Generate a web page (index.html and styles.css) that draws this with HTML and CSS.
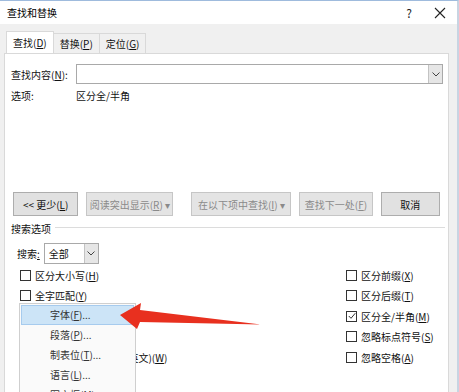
FILE: index.html
```html
<!DOCTYPE html>
<html lang="zh-CN">
<head>
  <meta charset="UTF-8">
  <title>查找和替换</title>
  <link rel="stylesheet" href="styles.css">
</head>
<body>
  <div class="window">
    <!-- 标题栏 -->
    <div class="titlebar">
      <span class="title">查找和替换</span>
      <span class="help">?</span>
      <svg class="close" width="12" height="12" viewBox="0 0 12 12"><path d="M1 1L11 11M11 1L1 11" stroke="#222" stroke-width="1.1" fill="none"/></svg>
    </div>
    <!-- 标签页 -->
    <div class="tabs">
      <div class="tab active">查找(<u>D</u>)</div>
      <div class="tab">替换(<u>P</u>)</div>
      <div class="tab">定位(<u>G</u>)</div>
    </div>
    <div class="panel">
      <div class="find-row">
        <span class="label">查找内容(<u>N</u>):</span>
        <div class="combo">
          <span class="combo-btn"><svg width="8" height="5" viewBox="0 0 8 5"><path d="M0.5 0.5L4 4L7.5 0.5" stroke="#444" fill="none"/></svg></span>
        </div>
      </div>
      <div class="opt-row">
        <span class="label">选项:</span>
        <span>区分全/半角</span>
      </div>
      <div class="btn-row">
        <button class="btn btn-less">&lt;&lt; 更少(<u>L</u>)</button>
        <button class="btn btn-read" disabled>阅读突出显示(<u>R</u>) ▾</button>
        <button class="btn btn-in" disabled>在以下项中查找(<u>I</u>) ▾</button>
        <button class="btn btn-next" disabled>查找下一处(<u>F</u>)</button>
        <button class="btn btn-cancel">取消</button>
      </div>
      <div class="section-title"><span>搜索选项</span></div>
      <div class="search-row">
        <span>搜索<u>:</u></span>
        <div class="select">
          <span class="select-val">全部</span>
          <span class="select-btn"><svg width="8" height="5" viewBox="0 0 8 5"><path d="M0.5 0.5L4 4L7.5 0.5" stroke="#444" fill="none"/></svg></span>
        </div>
      </div>
      <div class="checks">
        <div class="col">
          <div class="check"><span class="box"></span>区分大小写(<u>H</u>)</div>
          <div class="check"><span class="box"></span>全字匹配(<u>Y</u>)</div>
          <div class="check"><span class="box"></span>使用通配符(<u>U</u>)</div>
          <div class="check"><span class="box"></span>同音(英文)(<u>K</u>)</div>
          <div class="check"><span class="box"></span>查找单词的所有形式(英文)(<u>W</u>)</div>
        </div>
        <div class="col col-right">
          <div class="check"><span class="box"></span>区分前缀(<u>X</u>)</div>
          <div class="check"><span class="box"></span>区分后缀(<u>T</u>)</div>
          <div class="check"><span class="box checked"><svg width="8" height="8" viewBox="0 0 8 8"><path d="M0.8 4L3 6.3L7.3 1.2" stroke="#333" stroke-width="1" fill="none"/></svg></span>区分全/半角(<u>M</u>)</div>
          <div class="check"><span class="box"></span>忽略标点符号(<u>S</u>)</div>
          <div class="check"><span class="box"></span>忽略空格(<u>A</u>)</div>
        </div>
      </div>
    </div>
  </div>

  <!-- 格式 弹出菜单 -->
  <div class="menu">
    <div class="menu-item hover">字体(<u>F</u>)...</div>
    <div class="menu-item">段落(<u>P</u>)...</div>
    <div class="menu-item">制表位(<u>T</u>)...</div>
    <div class="menu-item">语言(<u>L</u>)...</div>
    <div class="menu-item">图文框(<u>M</u>)...</div>
  </div>

  <!-- 红色箭头标注 -->
  <svg class="arrow" width="459" height="392" viewBox="0 0 459 392">
    <polygon points="120,315 141,303 140,310 261,324.5 140,322 137,329" fill="#e8301f"/>
  </svg>
</body>
</html>
```

FILE: styles.css
```css
body { margin: 0; font-family: "Noto Sans CJK SC", "Noto Sans", sans-serif; font-size: 10px; color: #111; background: #f0f0f0; overflow: hidden; }
u { text-decoration: underline; text-underline-offset: 1px; }
.window { width: 459px; height: 392px; box-sizing: border-box; border-top: 1px solid #9fbbdd; border-right: 2px solid #c8d4e2; background: #f0f0f0; overflow: hidden; }
/* 标题栏 */
.titlebar { height: 23px; background: #fff; display: flex; align-items: center; padding: 0 0 0 7px; }
.title { flex: 1; font-size: 10px; color: #000; }
.help { font-size: 12px; margin-right: 22px; color: #222; }
.close { margin-right: 11px; }
/* 标签页 */
.tabs { display: flex; align-items: flex-end; height: 29px; padding-left: 6px; }
.tab { height: 19px; line-height: 19px; padding: 0 6px; border: 1px solid #d9d9d9; border-bottom: none; background: #f0f0f0; margin-left: -1px; }
.tab.active { height: 21px; line-height: 22px; background: #fff; margin-left: 0; z-index: 1; }
.panel { margin-left: 4px; width: 445px; height: 340px; background: #fff; border: 1px solid #d9d9d9; border-bottom: none; box-sizing: border-box; }
.find-row { display: flex; align-items: center; margin-top: 10px; padding-left: 6px; }
.label { width: 65px; }
.combo { width: 367px; height: 20px; box-sizing: border-box; border: 1px solid #a9a9a9; display: flex; justify-content: flex-end; }
.combo-btn { width: 13px; height: 18px; background: #e6e6e6; border-left: 1px solid #c3c3c3; display: flex; align-items: center; justify-content: center; }
.opt-row { display: flex; padding-left: 6px; margin-top: 4px; line-height: 16px; }
.btn-row { display: flex; margin-top: 88px; padding-left: 8px; }
.btn { height: 24px; font-family: inherit; font-size: 10px; color: #111; background: #e1e1e1; border: 1px solid #adadad; padding: 0; margin-right: 8px; }
.btn:disabled { color: #8a8a8a; background: #e4e4e4; border-color: #c6c6c6; }
.btn-less { width: 66px; }
.btn-read { width: 88px; margin-right: 18px; }
.btn-in { width: 101px; }
.btn-next { width: 74px; }
.btn-cancel { width: 60px; }
.section-title { display: flex; align-items: center; margin-top: 4px; padding-left: 6px; height: 16px; }
.section-title::after { content: ""; flex: 1; height: 1px; background: #dcdcdc; margin: 0 3px 2px 4px; }
.search-row { display: flex; align-items: center; margin-top: 7px; padding-left: 12px; gap: 4px; }
.select { width: 55px; height: 21px; box-sizing: border-box; border: 1px solid #a9a9a9; display: flex; align-items: center; }
.select-val { flex: 1; padding-left: 4px; }
.select-btn { width: 13px; height: 19px; background: #e6e6e6; border-left: 1px solid #c3c3c3; display: flex; align-items: center; justify-content: center; }
.checks { display: flex; margin-top: 1px; padding-left: 15px; }
.col { flex: none; width: 326px; }
.col-right { width: 100px; }
.check { height: 20.5px; display: flex; align-items: center; white-space: nowrap; }
.box { flex: none; width: 9px; height: 9px; border: 1px solid #333; margin-right: 4px; display: flex; align-items: center; justify-content: center; background: #fff; }
/* 弹出菜单 */
.menu { position: absolute; left: 19px; top: 303px; width: 115px; height: 88px; overflow: hidden; background: #fafafa; border: 1px solid #cfcfcf; border-bottom: none; padding-top: 1px; }
.menu-item { height: 18px; line-height: 18px; padding-left: 28px; color: #333; border: 1px solid transparent; margin: 0 1px; }
.menu-item.hover { background: #cce4f7; border-color: #a6cbee; }
.arrow { position: absolute; left: 0; top: 0; pointer-events: none; }
```
